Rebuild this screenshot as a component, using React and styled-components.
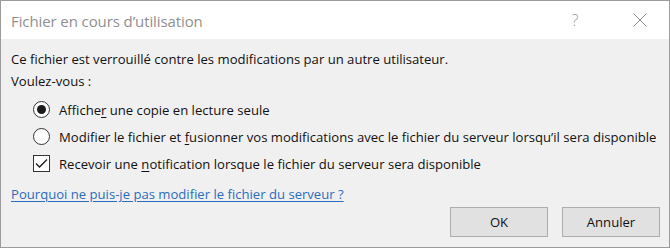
import React from "react";
import styled, { createGlobalStyle } from "styled-components";

const Global = createGlobalStyle`
  html, body { margin: 0; padding: 0; background: #ffffff; }
  body { font-family: "Open Sans", "Noto Sans", sans-serif; }
  * { box-sizing: border-box; }
`;

const Window = styled.div`
  width: 670px;
  height: 248px;
  border: 1px solid #9b9b9b;
  background: #f0f0f0;
  display: flex;
  flex-direction: column;
  font-family: "Open Sans", "Noto Sans", sans-serif;
  color: #111111;
`;

const TitleBar = styled.div`
  height: 38px;
  background: #ffffff;
  display: flex;
  align-items: center;
  padding-left: 10px;
  flex-shrink: 0;
`;

const Title = styled.div`
  flex: 1;
  font-size: 15px;
  color: #8f8f8f;
  padding-top: 2px;
  letter-spacing: -0.1px;
`;

const TitleButton = styled.div`
  width: ${(p) => p.$w}px;
  height: 38px;
  display: flex;
  align-items: center;
  justify-content: center;
  color: #8f8f8f;
`;

const HelpGlyph = styled.span`
  font-size: 16px;
  font-family: "Open Sans", sans-serif;
  color: #9a9a9a;
  font-weight: 300;
`;

const Body = styled.div`
  flex: 1;
  display: flex;
  flex-direction: column;
  padding: 9px 9px 0 10px;
  font-size: 13.1px;
`;

const Line = styled.div`
  height: 22px;
  line-height: 22px;
  white-space: nowrap;
`;

const Options = styled.div`
  display: flex;
  flex-direction: column;
  margin-top: 4px;
  padding-left: 22px;
`;

const Option = styled.div`
  height: 27px;
  display: flex;
  align-items: center;
  gap: 9px;
  white-space: nowrap;
`;

const Radio = styled.span`
  width: 17px;
  height: 17px;
  border-radius: 50%;
  border: 1px solid #333333;
  background: #ffffff;
  display: flex;
  align-items: center;
  justify-content: center;
  flex-shrink: 0;
  &::after {
    content: "";
    width: 9px;
    height: 9px;
    border-radius: 50%;
    background: #1a1a1a;
    display: ${(p) => (p.$checked ? "block" : "none")};
  }
`;

const Check = styled.span`
  width: 17px;
  height: 17px;
  border: 1px solid #333333;
  background: #ffffff;
  display: flex;
  align-items: center;
  justify-content: center;
  flex-shrink: 0;
`;

const Key = styled.span`
  text-decoration: underline;
  text-underline-offset: 2px;
`;

const Link = styled.a`
  display: block;
  margin-top: 6px;
  height: 22px;
  line-height: 22px;
  color: #2a6cc0;
  text-decoration: underline;
  text-underline-offset: 2px;
  cursor: pointer;
`;

const Footer = styled.div`
  display: flex;
  justify-content: flex-end;
  gap: 14px;
  margin-top: 2px;
`;

const Button = styled.button`
  width: 98px;
  height: 30px;
  background: #e1e1e1;
  border: 1px solid #adadad;
  font-family: "Open Sans", "Noto Sans", sans-serif;
  font-size: 13.1px;
  color: #111111;
  padding: 0;
`;

export default function App() {
  return (
    <>
      <Global />
      <Window>
        <TitleBar>
          <Title>Fichier en cours d’utilisation</Title>
          <TitleButton $w={72}>
            <HelpGlyph>?</HelpGlyph>
          </TitleButton>
          <TitleButton $w={58}>
            <svg width="14" height="14" viewBox="0 0 14 14">
              <path d="M0.5 0.5 L13.5 13.5 M13.5 0.5 L0.5 13.5" stroke="#8a8a8a" strokeWidth="1" fill="none" />
            </svg>
          </TitleButton>
        </TitleBar>
        <Body>
          <Line>Ce fichier est verrouillé contre les modifications par un autre utilisateur.</Line>
          <Line>Voulez-vous :</Line>
          <Options>
            <Option>
              <Radio $checked />
              <span>
                Affiche<Key>r</Key> une copie en lecture seule
              </span>
            </Option>
            <Option>
              <Radio />
              <span>
                Modifier le fichier et <Key>f</Key>usionner vos modifications avec le fichier du serveur lorsqu’il sera disponible
              </span>
            </Option>
            <Option>
              <Check>
                <svg width="13" height="11" viewBox="0 0 13 11">
                  <path d="M1 5.5 L4.5 9 L12 1.5" stroke="#1a1a1a" strokeWidth="1.3" fill="none" />
                </svg>
              </Check>
              <span>
                Recevoir une <Key>n</Key>otification lorsque le fichier du serveur sera disponible
              </span>
            </Option>
          </Options>
          <Link>Pourquoi ne puis-je pas modifier le fichier du serveur ?</Link>
          <Footer>
            <Button>OK</Button>
            <Button>Annuler</Button>
          </Footer>
        </Body>
      </Window>
    </>
  );
}
